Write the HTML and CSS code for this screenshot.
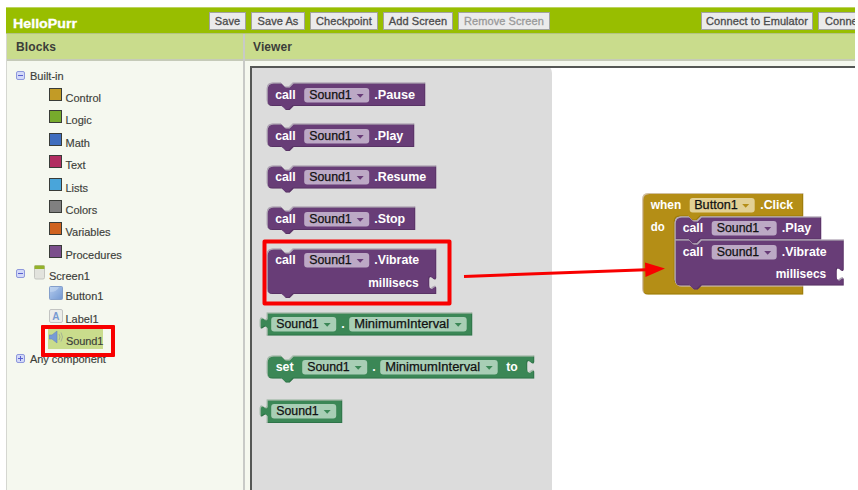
FILE: index.html
```html
<!DOCTYPE html>
<html lang="en">
<head>
<meta charset="utf-8">
<title>HelloPurr</title>
<link rel="stylesheet" href="styles.css">
</head>
<body>
<div class="app">
  <header class="toolbar">
    <h1 class="title"><svg width="66" height="18"><text x="0" y="13" textLength="64" lengthAdjust="spacingAndGlyphs">HelloPurr</text></svg></h1>
    <div class="group">
      <button class="btn save">Save</button>
      <button class="btn save-as">Save As</button>
      <button class="btn checkpoint">Checkpoint</button>
      <button class="btn add">Add Screen</button>
      <button class="btn remove" disabled>Remove Screen</button>
    </div>
    <div class="group connect">
      <button class="btn emulator">Connect to Emulator</button>
      <button class="btn device">Connect to Device</button>
    </div>
  </header>
  <main class="columns">
    <section class="palette">
      <h2 class="heading">Blocks</h2>
      <ul class="tree">
        <li class="node root"><i class="toggle"></i><span>Built-in</span></li>
        <li class="node leaf"><i class="swatch control"></i><span>Control</span></li>
        <li class="node leaf"><i class="swatch logic"></i><span>Logic</span></li>
        <li class="node leaf"><i class="swatch math"></i><span>Math</span></li>
        <li class="node leaf"><i class="swatch textc"></i><span>Text</span></li>
        <li class="node leaf"><i class="swatch lists"></i><span>Lists</span></li>
        <li class="node leaf"><i class="swatch colors"></i><span>Colors</span></li>
        <li class="node leaf"><i class="swatch variables"></i><span>Variables</span></li>
        <li class="node leaf"><i class="swatch procedures"></i><span>Procedures</span></li>
        <li class="node root screen"><i class="toggle"></i>
          <svg class="screen-icon" width="12" height="15"><rect x=".5" y=".5" width="10" height="13.5" rx="1.5" fill="#e2e3dd" stroke="#c4c5c0"/><path d="M.5 .5h10v3.500H.5z" fill="#94b32a"/></svg>
          <span>Screen1</span></li>
        <li class="node leaf comp"><svg class="icon" width="14" height="14"><defs><linearGradient id="blue" x1="0" y1="0" x2="1" y2="1"><stop stop-color="#b5ccee"/><stop offset="1" stop-color="#7298d2"/></linearGradient></defs><rect x=".5" y=".5" width="13" height="13" rx="1" fill="url(#blue)" stroke="#839fcb"/><path d="M1 6Q8 6 10 1H1z" fill="#c5d8f2" opacity=".6"/></svg><span>Button1</span></li>
        <li class="node leaf comp"><svg class="icon" width="14" height="14"><rect x=".5" y=".5" width="13" height="13" rx="1.5" fill="#ecedea" stroke="#c2c4c2"/><text x="3.2" y="10.8" class="label-a">A</text></svg><span>Label1</span></li>
        <li class="node leaf comp"><span class="selected"><svg class="icon" width="15" height="14"><path d="M0 5h3l5-4v12l-5-4H0z" fill="#779bd5" stroke="#6687bd" stroke-width=".6"/><path d="M10 4q2 3 0 6M12 2.5q3 4.500 0 9" fill="none" stroke="#a5b395"/></svg><span>Sound1</span></span></li>
        <li class="node root any"><i class="toggle closed"></i><span>Any component</span></li>
      </ul>
      <div class="marker"></div>
    </section>
    <section class="viewer">
      <h2 class="heading">Viewer</h2>
      <svg class="workspace" width="605" height="424" viewBox="250 66 605 424">
        <defs>
          <filter id="bevel" x="-5%" y="-20%" width="110%" height="140%">
            <feOffset in="SourceAlpha" dx="1" dy="1" result="o"/>
            <feComposite in="SourceAlpha" in2="o" operator="out" result="edge"/>
            <feFlood flood-color="#fff" flood-opacity=".35"/><feComposite in2="edge" operator="in" result="light"/>
            <feOffset in="SourceAlpha" dx="-1" dy="-1" result="p"/>
            <feComposite in="SourceAlpha" in2="p" operator="out" result="edge2"/>
            <feFlood flood-color="#000" flood-opacity=".28"/><feComposite in2="edge2" operator="in" result="dark"/>
            <feMerge><feMergeNode in="SourceGraphic"/><feMergeNode in="dark"/><feMergeNode in="light"/></feMerge>
          </filter>
          <g id="drop"><rect x="0" y="0" width="65" height="14.500" rx="3"/><path d="M52.500 6h7l-3.500 3.800z" class="caret"/></g>
          <g id="callrow">
            <text class="w" x="275.500" y="99.500" textLength="20.500" lengthAdjust="spacingAndGlyphs">call</text>
            <use href="#drop" x="304.500" y="88.500"/>
            <text class="b" x="309.500" y="99.500" textLength="42.500" lengthAdjust="spacingAndGlyphs">Sound1</text>
          </g>
        </defs>
        <rect x="250" y="66" width="605" height="424" fill="#fff"/>
        <path d="M250 66H546q6 1 6 7V490H250z" fill="#dcdcdc"/>
        <path d="M855 67H251V490" fill="none" stroke="#555755" stroke-width="2"/>

        <g transform="translate(-.3 -.5)">
        <g class="purple">
          <path class="shape" d="M267 89q0-6 6-6h8l4 4h4l4-4H425.500V106.500H294l-4 4h-4l-4-4h-9q-6 0-6-6z"/>
          <use href="#callrow"/>
          <text class="w" x="374.500" y="99.500" textLength="41" lengthAdjust="spacingAndGlyphs">.Pause</text>

          <path class="shape" d="M267 130q0-6 6-6h8l4 4h4l4-4H414.500V147.500H294l-4 4h-4l-4-4h-9q-6 0-6-6z"/>
          <use href="#callrow" y="41"/>
          <text class="w" x="374.500" y="140.500" textLength="29" lengthAdjust="spacingAndGlyphs">.Play</text>

          <path class="shape" d="M267 172q0-6 6-6h8l4 4h4l4-4H436.500V189H294l-4 4h-4l-4-4h-9q-6 0-6-6z"/>
          <use href="#callrow" y="82"/>
          <text class="w" x="374.500" y="181.500" textLength="52" lengthAdjust="spacingAndGlyphs">.Resume</text>

          <path class="shape" d="M267 213q0-6 6-6h8l4 4h4l4-4H415.500V230.500H294l-4 4h-4l-4-4h-9q-6 0-6-6z"/>
          <use href="#callrow" y="124"/>
          <text class="w" x="374.500" y="223.500" textLength="31" lengthAdjust="spacingAndGlyphs">.Stop</text>

          <path class="shape" d="M267 255q0-6 6-6h8l4 4h4l4-4H436.500V278.500c-1 3-2.500 1-4.500-.5s-2.500 0-2.500 3v4c0 3 .5 4.500 2.500 3s3.500-3 4.500 0V294.500H294l-4 4h-4l-4-4h-9q-6 0-6-6z"/>
          <use href="#callrow" y="165"/>
          <text class="w" x="374.500" y="264.500" textLength="45" lengthAdjust="spacingAndGlyphs">.Vibrate</text>
          <text class="w" x="368.500" y="287.500" textLength="50.500" lengthAdjust="spacingAndGlyphs">millisecs</text>
        </g>

        <g class="green">
          <path class="shape" d="M267 313H472.500V336H267V328c-1-2-2-1-4 .5s-3 0-3-3v-4c0-3 1-4.500 3-3s3 2 4 0z"/>
          <use href="#drop" x="271.500" y="317.500"/>
          <text class="b" x="276.500" y="328.500" textLength="42.500" lengthAdjust="spacingAndGlyphs">Sound1</text>
          <text class="w" x="341.500" y="328.500">.</text>
          <rect x="349.500" y="317.500" width="117.500" height="14.500" rx="3"/><path class="caret" d="M455 323.500h7l-3.500 3.800z"/>
          <text class="b" x="354.500" y="328.500" textLength="95" lengthAdjust="spacingAndGlyphs">MinimumInterval</text>

          <path class="shape" d="M267 362q0-6 6-6h8l4 4h4l4-4H534.500V362.500c-1 3-2.500 1-4.500-.5s-2.500 0-2.500 3v4c0 3 .5 4.500 2.500 3s3.500-3 4.500 0V379H294l-4 4h-4l-4-4h-9q-6 0-6-6z"/>
          <text class="w" x="276" y="371.500" textLength="18" lengthAdjust="spacingAndGlyphs">set</text>
          <use href="#drop" x="302.500" y="360.500"/>
          <text class="b" x="307.500" y="371.500" textLength="42.500" lengthAdjust="spacingAndGlyphs">Sound1</text>
          <text class="w" x="372.500" y="371.500">.</text>
          <rect x="380.500" y="360.500" width="117.500" height="14.500" rx="3"/><path class="caret" d="M486 366.500h7l-3.500 3.800z"/>
          <text class="b" x="385.500" y="371.500" textLength="95" lengthAdjust="spacingAndGlyphs">MinimumInterval</text>
          <text class="w" x="506.500" y="371.500" textLength="11.500" lengthAdjust="spacingAndGlyphs">to</text>

          <path class="shape" d="M267 400H342.500V423.500H267V416c-1-2-2-1-4 .5s-3 0-3-3v-4c0-3 1-4.500 3-3s3 2 4 0z"/>
          <use href="#drop" x="271.500" y="404.500"/>
          <text class="b" x="276.500" y="415.500" textLength="42.500" lengthAdjust="spacingAndGlyphs">Sound1</text>
        </g>

        <g class="gold">
          <path class="shape" d="M642.500 199.500q0-6 6-6H803.500V217H701l-4 4h-4l-4-4h-8q-6 0-6 6V280q0 6 6 6H803.500V295H648.500q-6 0-6-6z"/>
          <text class="w" x="651" y="209.500" textLength="30.500" lengthAdjust="spacingAndGlyphs">when</text>
          <use href="#drop" x="690" y="198.500"/>
          <text class="b" x="694.500" y="209.500" textLength="43.500" lengthAdjust="spacingAndGlyphs">Button1</text>
          <text class="w" x="760.500" y="209.500" textLength="33" lengthAdjust="spacingAndGlyphs">.Click</text>
          <text class="w" x="651" y="231.500" textLength="14" lengthAdjust="spacingAndGlyphs">do</text>
        </g>
        <g class="purple">
          <path class="shape" d="M675 223q0-6 6-6h8l4 4h4l4-4H821.500V240H701l-4 4h-4l-4-4H675z"/>
          <path class="shape" d="M675 240H689l4 4h4l4-4H844V270c-1 3-2.500 1-4.500-.5s-2.500 0-2.500 3v4c0 3 .5 4.500 2.500 3s3.500-3 4.500 0V286H702l-4 4h-4l-4-4h-9q-6 0-6-6z"/>
          <use href="#callrow" x="407.500" y="133"/>
          <text class="w" x="782" y="232.500" textLength="29.500" lengthAdjust="spacingAndGlyphs">.Play</text>
          <use href="#callrow" x="407.500" y="157"/>
          <text class="w" x="782" y="256.500" textLength="45" lengthAdjust="spacingAndGlyphs">.Vibrate</text>
          <text class="w" x="776" y="278.500" textLength="50.500" lengthAdjust="spacingAndGlyphs">millisecs</text>
        </g>
        </g>

        <rect x="264.500" y="241.500" width="185" height="62" fill="none" stroke="#f80000" stroke-width="4" stroke-linejoin="round"/>
        <path d="M464 276.500L646 269.700" stroke="#f80000" stroke-width="3"/>
        <path d="M645 262.500L665 268.500L645.500 277z" fill="#f80000"/>
      </svg>
    </section>
  </main>
</div>
</body>
</html>
```
FILE: styles.css
```css
* { box-sizing: border-box; }
body {
  margin: 0;
  background: #fff;
  color: #3c3e3a;
  font-family: "Liberation Sans", Arial, sans-serif;
  font-size: 11px;
  overflow: hidden;
}
.app {
  width: 849px;
  height: 483px;
  margin: 7px 0 0 6px;
  display: flex;
  flex-direction: column;
  overflow: hidden;
}
.toolbar {
  height: 27px;
  flex: none;
  display: flex;
  align-items: flex-start;
  background: #98be00;
  border-top: 1px solid #bcd35e;
  border-bottom: 1px solid #b3c383;
}
.title { margin: 7px 0 0 7px; width: 196px; height: 18px; flex: none; }
.title svg { display: block; fill: #fff; stroke: #fff; stroke-width: .3px; font-size: 13px; font-weight: bold; }
.group { display: flex; gap: 5px; margin-top: 4px; }
.connect { margin-left: 151px; }
.btn {
  height: 18px;
  flex: none;
  padding: 0;
  border: 1px solid #a2a3a0;
  background: #ebebeb;
  color: #4b4b4b;
  font: 11px/15px "Liberation Sans", Arial, sans-serif;
  letter-spacing: .08px;
  -webkit-text-stroke: .3px;
  white-space: nowrap;
  text-align: center;
}
.save { width: 37px; }
.save-as { width: 54px; }
.checkpoint { width: 68px; }
.add { width: 70px; }
.remove { width: 92px; color: #999; }
.emulator { width: 112px; }
.device { width: 112px; text-align: left; padding-left: 6px; }
.columns { display: flex; flex: 1; min-height: 0; }
.heading {
  margin: 0;
  height: 27px;
  background: #c9dc8c;
  border-bottom: 2px solid #c5cab8;
  font-size: 12px;
  line-height: 27px;
  letter-spacing: .1px;
}
.palette {
  position: relative;
  width: 239px;
  flex: none;
  background: #f5f8ef;
  border-left: 1px solid #d5d7d1;
  border-right: 2px solid #c8cac7;
}
.palette .heading { padding-left: 9px; }
.viewer { flex: 1; min-width: 0; background: #f5f8ef; }
.viewer .heading { padding-left: 8px; }
.workspace { display: block; margin: 5px 0 0 5px; }
.tree { list-style: none; margin: 0; padding: 4px 0 0; }
.node { display: flex; align-items: flex-start; height: 22.4px; line-height: 22px; white-space: nowrap; -webkit-text-stroke: .15px; }
.root { padding-left: 9px; height: 20px; line-height: 22px; }
.toggle {
  width: 9px;
  height: 9px;
  margin: 6px 5px 0 0;
  border: 1px solid #8e98dc;
  border-radius: 2px;
  background: linear-gradient(#5961cf, #5961cf) center / 5px 1px no-repeat #d3d9f8;
}
.closed {
  background: linear-gradient(#5961cf, #5961cf) center / 5px 1px no-repeat, linear-gradient(#5961cf, #5961cf) center / 1px 5px no-repeat #d3d9f8;
}
.leaf { padding-left: 42px; line-height: 26px; }
.swatch { width: 13px; height: 13px; margin: 3px 3.5px 0 0; border: 1px solid #393c38; }
.control { background: #c29b26; }
.logic { background: #77ab2c; }
.math { background: #3f6dbe; }
.textc { background: #b12d61; }
.lists { background: #49a5da; }
.colors { background: #808080; }
.variables { background: #d0631f; }
.procedures { background: #7b4f8c; }
.screen { height: 20px; line-height: 25px; }
.screen .toggle { margin-top: 5px; }
.screen-icon { margin: 1px 3px 0 4px; }
.icon { margin: 2px 2.5px 0 0; flex: none; }
.label-a { font-size: 10px; font-weight: bold; fill: #779ad2; }
.comp { line-height: 25px; }
.selected { display: flex; height: 20px; margin-left: -1px; background: #c9dc8c; letter-spacing: -.1px; }
.selected .icon { margin: 1px 2px 0 1px; }
.any { height: 22px; line-height: 17px; letter-spacing: -.05px; }
.any .toggle { margin-top: 3px; }
.marker { position: absolute; left: 34px; top: 291px; width: 74px; height: 32px; border: 4px solid #f80000; border-radius: 1px; }
.workspace text { font-size: 12.5px; }
.workspace .w { fill: #fff; font-weight: bold; }
.workspace .b { fill: #111; stroke: #111; stroke-width: .25px; }
.shape { filter: url(#bevel); }
.purple .shape { fill: #683c77; }
.green .shape { fill: #3b8756; }
.gold .shape { fill: #b48e18; }
.purple { fill: #bca9c5; --caret: #683c77; }
.green { fill: #a8ceb5; --caret: #3b8756; }
.gold { fill: #e2d095; --caret: #b48e18; }
.caret { fill: var(--caret); }
```
